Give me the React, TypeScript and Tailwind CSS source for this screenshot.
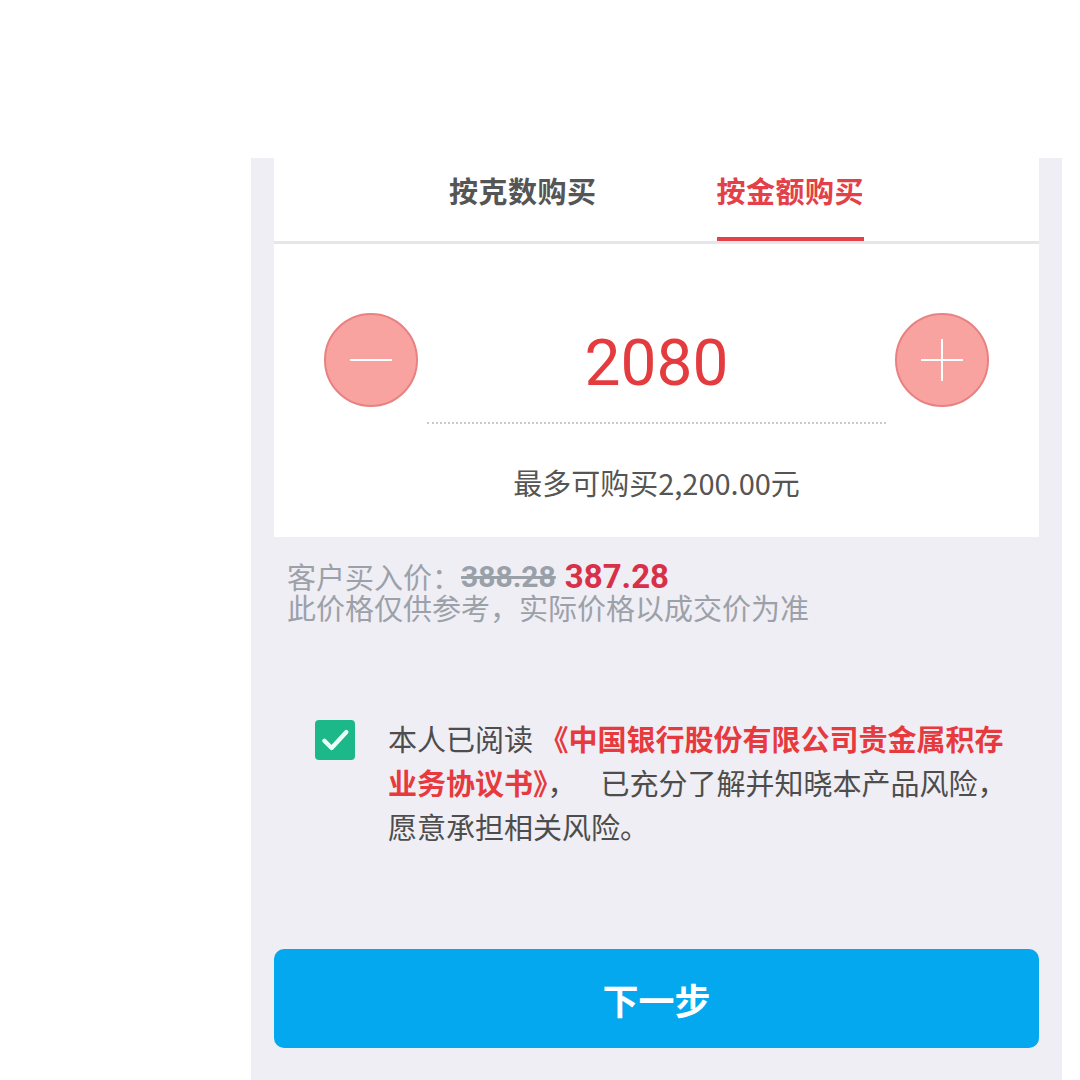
const cjk = "font-['Noto_Sans_CJK_SC','Noto_Sans',sans-serif]";

function RoundButton({ plus }: { plus?: boolean }) {
  return (
    <button
      type="button"
      className="relative flex h-[94px] w-[94px] items-center justify-center rounded-full border-2 border-[#e98082] bg-[#f9a3a0]"
    >
      <span className="absolute h-[2px] w-[42px] bg-white" />
      {plus && <span className="absolute h-[42px] w-[2px] bg-white" />}
    </button>
  );
}

export default function App() {
  return (
    <div className={`h-[1080px] w-[1080px] overflow-hidden bg-white pl-[251px] pt-[158px] ${cjk}`}>
      <div className="h-[922px] w-[811px] bg-[#efeef4] px-[23px]">
        {/* amount card */}
        <div className="h-[379px] bg-white">
          <div className="flex h-[86px] justify-center gap-[120px] border-b-[3px] border-[#e6e6e8]">
            <div className="flex flex-col items-center">
              <span className="pt-[14px] text-[29px] font-bold leading-[36px] tracking-[0.5px] text-[#555555]">按克数购买</span>
            </div>
            <div className="flex flex-col items-center justify-between">
              <span className="pt-[14px] text-[29px] font-bold leading-[36px] tracking-[0.5px] text-[#e3404a]">按金额购买</span>
              <span className="h-[4px] w-full bg-[#e3404a]" />
            </div>
          </div>

          <div className="mt-[69px] flex items-center justify-between px-[50px]">
            <RoundButton />
            <span className="pt-[8px] font-['Roboto',sans-serif] text-[64px] leading-none text-[#e43b3f]">2080</span>
            <RoundButton plus />
          </div>

          <div className="mx-auto mt-[15px] w-[459px] border-t-2 border-dotted border-[#c9c9c9]" />

          <p className="mt-[43px] text-center text-[29px] leading-[30px] text-[#555555]">
            最多可购买2,200.00元
          </p>
        </div>

        {/* price */}
        <div className="mt-[24px] pl-[13px] text-[29px] leading-[31px] text-[#9ca1a9]">
          <p className="flex items-center">
            <span>客户买入价：</span>
            <span className="font-['Roboto',sans-serif] text-[30px] font-bold leading-[30px] text-[#9aa0a8] line-through">388.28</span>
            <span className="ml-[9px] font-['Roboto',sans-serif] text-[33px] font-bold leading-[30px] text-[#d9304a]">387.28</span>
          </p>
          <p>此价格仅供参考，实际价格以成交价为准</p>
        </div>

        {/* agreement */}
        <div className="mt-[93px] flex items-start gap-[33px] pl-[41px]">
          <span className="mt-[4px] flex h-[40px] w-[40px] shrink-0 items-center justify-center rounded-[4px] bg-[#1cb889]">
            <svg viewBox="0 0 24 24" className="h-[32px] w-[32px]" fill="none" stroke="#e9fff7" strokeWidth="3.2" strokeLinecap="round" strokeLinejoin="round">
              <path d="M4 12.5l5.5 5.5L20.5 6" />
            </svg>
          </span>
          <p className="text-[29px] leading-[44px] text-[#4d4d4d]">
            本人已阅读 <span className="font-bold text-[#e63a3e]">《中国银行股份有限公司贵金属积存</span>
            <br />
            <span className="font-bold text-[#e63a3e]">业务协议书》</span>，<span className="inline-block w-[24px]" />已充分了解并知晓本产品风险，
            <br />
            愿意承担相关风险。
          </p>
        </div>

        {/* next */}
        <button
          type="button"
          className="mt-[101px] flex h-[99px] w-full items-center justify-center rounded-[10px] bg-[#03a8ef] text-[36px] font-bold text-white"
        >
          下一步
        </button>
      </div>
    </div>
  );
}
